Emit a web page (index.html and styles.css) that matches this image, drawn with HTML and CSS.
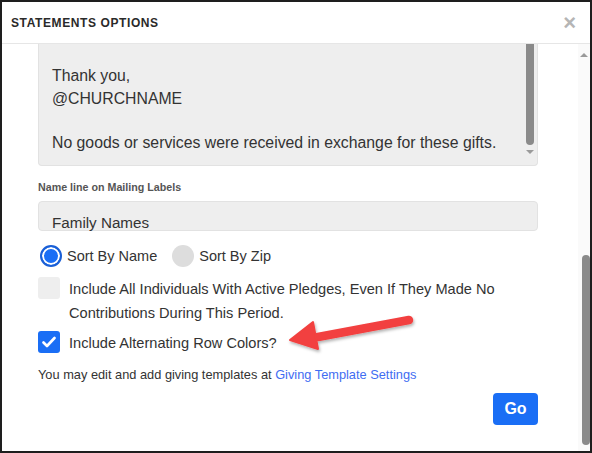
FILE: index.html
```html
<!DOCTYPE html>
<html lang="en">

<head>
  <meta charset="UTF-8">
  <meta name="viewport" content="width=device-width, initial-scale=1.0">
  <title>Statements Options</title>
  <link rel="stylesheet" href="styles.css">
</head>

<body>

  <div class="modal">
    <header class="modal-header">
      <h1>Statements Options</h1>
      <span class="close">&times;</span>
    </header>

    <div class="modal-main">
      <div class="content">

        <!-- message textarea, scrolled part way down -->
        <div class="textarea">
          <div class="textarea-text">
            <p>&nbsp;</p>
            <p>Thank you,</p>
            <p>@CHURCHNAME</p>
            <p>&nbsp;</p>
            <p>No goods or services were received in exchange for these gifts.</p>
          </div>
          <div class="inner-scroll">
            <div class="inner-thumb"></div>
            <div class="arrow-down"></div>
          </div>
        </div>

        <label class="field-label">Name line on Mailing Labels</label>
        <div class="input">Family Names</div>

        <div class="radios">
          <label class="radio-option"><span class="radio checked"></span>Sort By Name</label>
          <label class="radio-option"><span class="radio"></span>Sort By Zip</label>
        </div>

        <label class="check-option">
          <span class="checkbox"></span>
          <span>Include All Individuals With Active Pledges, Even If They Made No Contributions During This Period.</span>
        </label>

        <label class="check-option second">
          <span class="checkbox checked">
            <svg width="14" height="12" viewBox="0 0 14 12">
              <path d="M1.5 6.5 L5 10 L12.5 2" fill="none" stroke="#fff" stroke-width="2.6" stroke-linecap="round" stroke-linejoin="round" />
            </svg>
          </span>
          <span>Include Alternating Row Colors?</span>
        </label>

        <p class="note">You may edit and add giving templates at <a href="#">Giving Template Settings</a></p>

        <div class="actions">
          <button class="go-button">Go</button>
        </div>
      </div>

      <div class="page-scroll">
        <div class="arrow-up"></div>
        <div class="page-thumb"></div>
      </div>
    </div>

    <!-- red annotation arrow -->
    <svg class="annotation" width="140" height="50" viewBox="280 310 140 50">
      <defs>
        <filter id="shadow" x="-20%" y="-40%" width="140%" height="180%">
          <feDropShadow dx="1" dy="2" stdDeviation="1.5" flood-color="#000" flood-opacity="0.3" />
        </filter>
      </defs>
      <g filter="url(#shadow)" fill="#f2403f" stroke="#f2403f">
        <line x1="409" y1="320" x2="318" y2="337" stroke-width="8.5" stroke-linecap="round" />
        <polygon points="290,340 313,322 318,349" stroke-width="2" stroke-linejoin="round" />
      </g>
    </svg>
  </div>

</body>

</html>
```

FILE: styles.css
```css
body {
  margin: 0;
  padding: 0;
  font-family: 'Liberation Sans', Arial, sans-serif;
  color: #333;
  background-color: #fff;
}

.modal {
  position: relative;
  width: 592px;
  height: 453px;
  box-sizing: border-box;
  border: 2px solid #1e1e1e;
  background-color: #fff;
  display: flex;
  flex-direction: column;
  overflow: hidden;
}

.modal-header {
  height: 41px;
  flex-shrink: 0;
  display: flex;
  align-items: center;
  justify-content: space-between;
  padding: 0 14px 0 9px;
  border-bottom: 1px solid #e6e6e6;
}

.modal-header h1 {
  margin: 0;
  font-size: 12px;
  font-weight: bold;
  letter-spacing: 0.6px;
  text-transform: uppercase;
  color: #2a2a2a;
}

.close {
  font-size: 22px;
  font-weight: bold;
  color: #b5b5b5;
  line-height: 1;
}

.modal-main {
  flex: 1;
  display: flex;
  min-height: 0;
}

.content {
  flex: 1;
  padding: 0 0 0 36px;
}

/* textarea */
.textarea {
  width: 500px;
  height: 122px;
  box-sizing: border-box;
  background-color: #eee;
  border: 1px solid #e2e2e2;
  border-top: none;
  border-radius: 0 0 4px 4px;
  display: flex;
}

.textarea-text {
  flex: 1;
  margin-top: -1px;
  padding-left: 13px;
  font-size: 15.8px;
  line-height: 22.3px;
  color: #333;
}

.textarea-text p {
  margin: 0;
}

.inner-scroll {
  width: 12px;
  margin-right: 1px;
  display: flex;
  flex-direction: column;
  align-items: center;
}

.inner-thumb {
  width: 8px;
  height: 101px;
  background-color: #8a8a8a;
  border-radius: 0 0 4px 4px;
}

.arrow-down {
  margin-top: 5px;
  width: 0;
  height: 0;
  border-left: 4px solid transparent;
  border-right: 4px solid transparent;
  border-top: 4px solid #9a9a9a;
}

.field-label {
  display: block;
  margin-top: 15px;
  font-size: 10.7px;
  font-weight: bold;
  color: #555;
}

.input {
  margin-top: 8px;
  width: 500px;
  height: 30px;
  box-sizing: border-box;
  background-color: #eee;
  border: 1px solid #e2e2e2;
  border-radius: 4px;
  padding: 12px 0 0 13px;
  font-size: 15.2px;
  line-height: 18px;
  color: #333;
}

.radios {
  margin-top: 14px;
  display: flex;
  align-items: center;
  gap: 15px;
  padding-left: 2px;
}

.radio-option {
  display: flex;
  align-items: center;
  gap: 5px;
  font-size: 14.5px;
}

.radio {
  width: 22px;
  height: 22px;
  box-sizing: border-box;
  border-radius: 50%;
  background-color: #ddd;
}

.radio.checked {
  background-color: #1a6ef5;
  border: 2px solid #1a5fd6;
  box-shadow: inset 0 0 0 2px #fff;
}

.check-option {
  margin-top: 10px;
  display: flex;
  align-items: flex-start;
  gap: 9px;
  font-size: 14.6px;
  line-height: 24px;
  padding-right: 40px;
}

.check-option.second {
  margin-top: 6px;
}

.checkbox {
  flex-shrink: 0;
  width: 22px;
  height: 22px;
  box-sizing: border-box;
  border-radius: 3px;
  background-color: #eee;
  display: flex;
  align-items: center;
  justify-content: center;
}

.checkbox.checked {
  background-color: #1a6ef5;
}

.note {
  margin: 12px 0 0;
  font-size: 12.8px;
  color: #333;
}

.note a {
  color: #3f6df2;
  text-decoration: none;
}

.actions {
  width: 500px;
  display: flex;
  justify-content: flex-end;
  margin-top: 11px;
}

.go-button {
  width: 45px;
  height: 32px;
  border: none;
  border-radius: 4px;
  background-color: #1a6ef5;
  color: #fff;
  font-family: 'Liberation Sans', Arial, sans-serif;
  font-size: 16px;
  font-weight: bold;
  cursor: pointer;
}

/* page scrollbar */
.page-scroll {
  width: 12px;
  background-color: #fafafa;
  display: flex;
  flex-direction: column;
  align-items: flex-end;
}

.arrow-up {
  margin: 9px 2px 0 0;
  width: 0;
  height: 0;
  border-left: 4px solid transparent;
  border-right: 4px solid transparent;
  border-bottom: 4px solid #9a9a9a;
}

.page-thumb {
  margin-top: 198px;
  width: 8px;
  height: 190px;
  background-color: #8a8a8a;
  border-radius: 4px;
}

.annotation {
  position: absolute;
  left: 278px;
  top: 308px;
}
```
